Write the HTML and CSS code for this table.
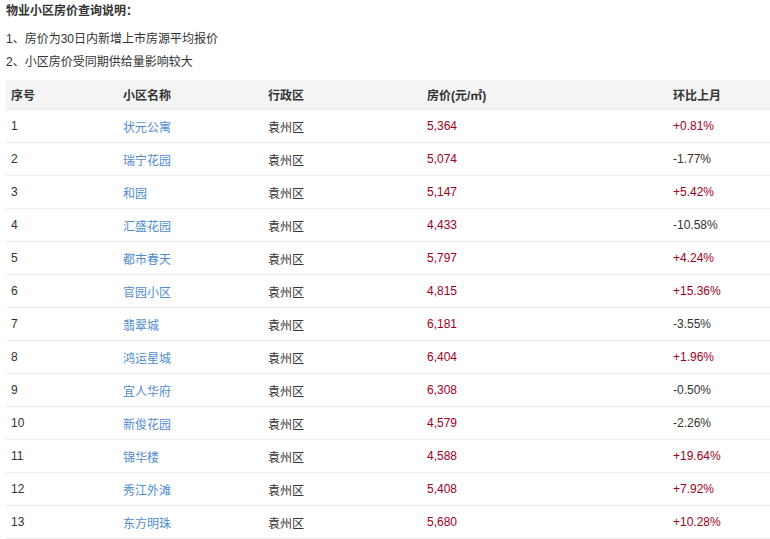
FILE: index.html
```html
<!DOCTYPE html>
<html lang="zh-CN">
<head>
<meta charset="utf-8">
<title>物业小区房价查询</title>
<link rel="stylesheet" href="styles.css">
</head>
<body>
<div class="page">
  <h3 class="title">物业小区房价查询说明：</h3>
  <p class="note">1、房价为30日内新增上市房源平均报价</p>
  <p class="note">2、小区房价受同期供给量影响较大</p>
  <table class="prices">
    <colgroup>
      <col class="c1"><col class="c2"><col class="c3"><col class="c4"><col class="c5">
    </colgroup>
    <thead>
      <tr><th>序号</th><th>小区名称</th><th>行政区</th><th>房价(元/㎡)</th><th>环比上月</th></tr>
    </thead>
    <tbody>
      <tr><td>1</td><td><a>状元公寓</a></td><td>袁州区</td><td class="red">5,364</td><td class="red">+0.81%</td></tr>
      <tr><td>2</td><td><a>瑞宁花园</a></td><td>袁州区</td><td class="red">5,074</td><td>-1.77%</td></tr>
      <tr><td>3</td><td><a>和园</a></td><td>袁州区</td><td class="red">5,147</td><td class="red">+5.42%</td></tr>
      <tr><td>4</td><td><a>汇盛花园</a></td><td>袁州区</td><td class="red">4,433</td><td>-10.58%</td></tr>
      <tr><td>5</td><td><a>都市春天</a></td><td>袁州区</td><td class="red">5,797</td><td class="red">+4.24%</td></tr>
      <tr><td>6</td><td><a>官园小区</a></td><td>袁州区</td><td class="red">4,815</td><td class="red">+15.36%</td></tr>
      <tr><td>7</td><td><a>翡翠城</a></td><td>袁州区</td><td class="red">6,181</td><td>-3.55%</td></tr>
      <tr><td>8</td><td><a>鸿运星城</a></td><td>袁州区</td><td class="red">6,404</td><td class="red">+1.96%</td></tr>
      <tr><td>9</td><td><a>宜人华府</a></td><td>袁州区</td><td class="red">6,308</td><td>-0.50%</td></tr>
      <tr><td>10</td><td><a>新俊花园</a></td><td>袁州区</td><td class="red">4,579</td><td>-2.26%</td></tr>
      <tr><td>11</td><td><a>锦华楼</a></td><td>袁州区</td><td class="red">4,588</td><td class="red">+19.64%</td></tr>
      <tr><td>12</td><td><a>秀江外滩</a></td><td>袁州区</td><td class="red">5,408</td><td class="red">+7.92%</td></tr>
      <tr><td>13</td><td><a>东方明珠</a></td><td>袁州区</td><td class="red">5,680</td><td class="red">+10.28%</td></tr>
    </tbody>
  </table>
</div>
</body>
</html>
```

FILE: styles.css
```css
html, body {
  margin: 0;
  padding: 0;
  background: #fff;
}
.page {
  padding: 3px 0 0 6px;
  font-family: "Liberation Sans", "Noto Sans CJK SC", sans-serif;
  font-size: 12px;
  color: #333;
}
.title {
  margin: 0 0 9px 0;
  font-size: 12px;
  font-weight: bold;
  line-height: 16px;
  color: #333;
}
.note {
  margin: 0;
  line-height: 23px;
}
.prices {
  margin-top: 6px;
  width: 764px;
  border-collapse: collapse;
  table-layout: fixed;
}
.c1 { width: 112px; }
.c2 { width: 145px; }
.c3 { width: 159px; }
.c4 { width: 246px; }
.c5 { width: 102px; }
.prices th {
  background: #f4f4f4;
  height: 29px;
  padding: 0 0 0 5px;
  text-align: left;
  font-weight: bold;
  color: #333;
  border-bottom: 1px solid #ebebeb;
}
.prices td {
  height: 32px;
  padding: 0 0 0 5px;
  border-bottom: 1px solid #ececec;
  color: #333;
}
.prices a {
  color: #4f8ccf;
  text-decoration: none;
}
.prices td.red {
  color: #a0001e;
}
```
